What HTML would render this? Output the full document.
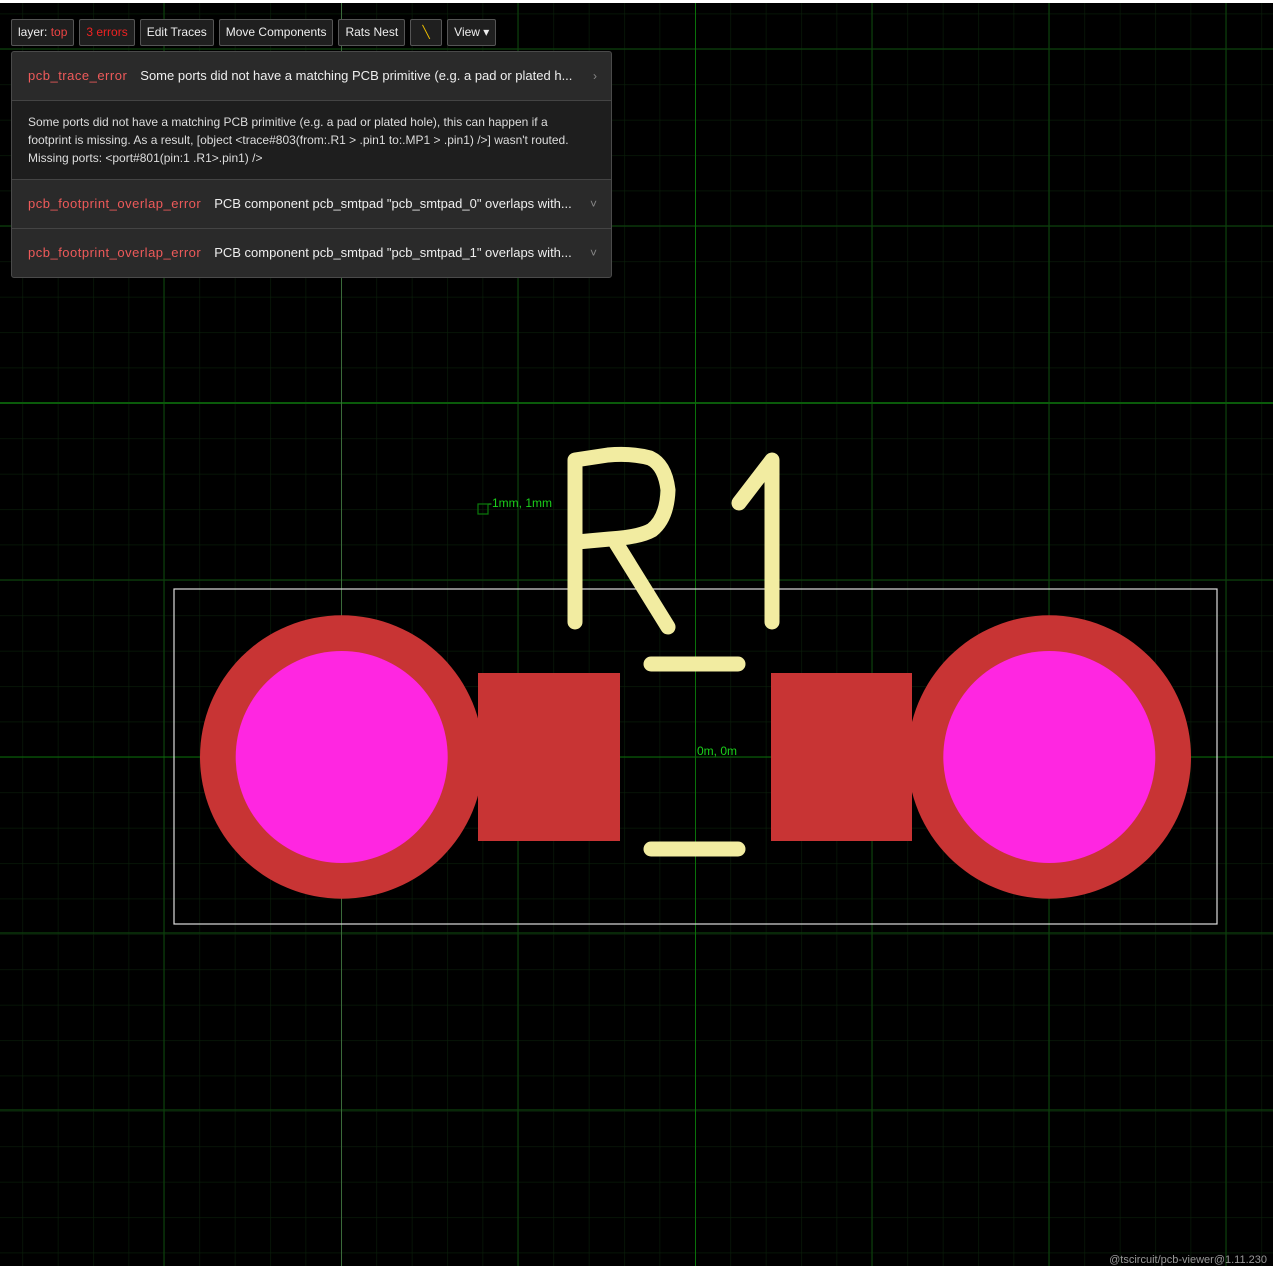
<!DOCTYPE html>
<html><head><meta charset="utf-8"><style>
html,body{margin:0;padding:0;background:#000;width:1273px;height:1266px;overflow:hidden;font-family:"Liberation Sans",Arial,sans-serif}
#top{position:absolute;left:0;top:0;width:1273px;height:3px;background:#fff}
svg{position:absolute;left:0;top:0}
.tb{position:absolute;top:19px;height:26px;display:flex;gap:5px;left:11px}
.b{box-sizing:border-box;height:27px;background:#1f1f1f;border:1px solid #555;border-radius:2px;color:#eee;font-size:12px;line-height:25px;padding:0 6px;white-space:nowrap}
.panel{position:absolute;left:11px;top:51px;width:599px;background:#2a2a2a;border:1px solid #4a4a4a;border-radius:3px;font-size:13px;color:#eee}
.row{height:48px;line-height:48px;padding:0 16px;border-bottom:1px solid #444;position:relative;white-space:nowrap;overflow:hidden}
.row .e{color:#ee5a5a;margin-right:13px;letter-spacing:0.5px}
.row .c{position:absolute;right:14px;top:0;color:#888;font-size:12px}
.det{background:#1e1e1e;padding:12px 30px 12px 16px;font-size:12px;line-height:18px;color:#ddd;border-bottom:1px solid #444}
.ver{position:absolute;right:6px;bottom:0;color:#999;font-size:11px}
</style></head><body>
<svg width="1273" height="1266" viewBox="0 0 1273 1266">
<defs><pattern id="mg" patternUnits="userSpaceOnUse" x="22.4" y="13.6" width="35.4" height="35.4">
<path d="M0 0V35.4M0 0H35.4" stroke="#0a200a" stroke-width="1.2" fill="none"/></pattern></defs>
<rect width="1273" height="1266" fill="#000"/>
<rect width="1273" height="1266" fill="url(#mg)"/>
<g stroke="#0c400c" stroke-width="1.2">
<line x1="164" y1="0" x2="164" y2="1266"/><line x1="518" y1="0" x2="518" y2="1266"/><line x1="872" y1="0" x2="872" y2="1266"/><line x1="1049" y1="0" x2="1049" y2="1266"/><line x1="1226" y1="0" x2="1226" y2="1266"/>
<line x1="0" y1="49" x2="1273" y2="49"/><line x1="0" y1="226" x2="1273" y2="226"/><line x1="0" y1="580" x2="1273" y2="580"/><line x1="0" y1="933" x2="1273" y2="933"/><line x1="0" y1="1110" x2="1273" y2="1110"/>
</g>
<line x1="0" y1="403" x2="1273" y2="403" stroke="#0a5a0a" stroke-width="2"/>
<line x1="341.5" y1="0" x2="341.5" y2="1266" stroke="#3a6a3a" stroke-width="1"/>
<line x1="695.5" y1="0" x2="695.5" y2="1266" stroke="#0a700a" stroke-width="1"/>
<line x1="0" y1="757" x2="1273" y2="757" stroke="#0a700a" stroke-width="1"/>
<rect x="174" y="589" width="1043" height="335" fill="none" stroke="#ddd" stroke-width="1.2"/>
<circle cx="341.7" cy="757" r="141.7" fill="#c83434"/>
<circle cx="341.7" cy="757" r="106" fill="#ff26e1"/>
<circle cx="1049.3" cy="757" r="141.7" fill="#c83434"/>
<circle cx="1049.3" cy="757" r="106" fill="#ff26e1"/>
<rect x="478" y="673" width="142" height="168" fill="#c83434"/>
<rect x="771" y="673" width="141" height="168" fill="#c83434"/>
<g stroke="#f2eca1" stroke-width="15" stroke-linecap="round" stroke-linejoin="round" fill="none">
<path d="M575 622V460L608 455Q632 453 650 458Q665 465 668 490Q667 518 652 530Q640 537 610 539L577 542"/>
<path d="M616 543L668 627"/>
<path d="M739 503L772 460V622"/>
<path d="M651 664H738"/>
<path d="M651 849H738"/>
</g>
<rect x="478" y="504" width="10" height="10" fill="none" stroke="#0a7a0a" stroke-width="1.2"/>
<text x="488" y="507" fill="#1bd01b" font-family="Liberation Sans" font-size="12">-1mm, 1mm</text>
<text x="697" y="755" fill="#1bd01b" font-family="Liberation Sans" font-size="12">0m, 0m</text>
</svg>
<div id="top"></div>
<div class="tb">
<div class="b">layer: <span style="color:#ee4444">top</span></div>
<div class="b" style="color:#ee2222">3 errors</div>
<div class="b">Edit Traces</div>
<div class="b">Move Components</div>
<div class="b">Rats Nest</div>
<div class="b" style="width:32px;color:#f0c000;text-align:center">&#9586;</div>
<div class="b">View &#9662;</div>
</div>
<div class="panel">
<div class="row"><span class="e">pcb_trace_error</span>Some ports did not have a matching PCB primitive (e.g. a pad or plated h...<span class="c">›</span></div>
<div class="det">Some ports did not have a matching PCB primitive (e.g. a pad or plated hole), this can happen if a footprint is missing. As a result, [object &lt;trace#803(from:.R1 &gt; .pin1 to:.MP1 &gt; .pin1) /&gt;] wasn't routed. Missing ports: &lt;port#801(pin:1 .R1&gt;.pin1) /&gt;</div>
<div class="row"><span class="e">pcb_footprint_overlap_error</span>PCB component pcb_smtpad "pcb_smtpad_0" overlaps with...<span class="c">˅</span></div>
<div class="row" style="border-bottom:none"><span class="e">pcb_footprint_overlap_error</span>PCB component pcb_smtpad "pcb_smtpad_1" overlaps with...<span class="c">˅</span></div>
</div>
<div class="ver">@tscircuit/pcb-viewer@1.11.230</div>
</body></html>
